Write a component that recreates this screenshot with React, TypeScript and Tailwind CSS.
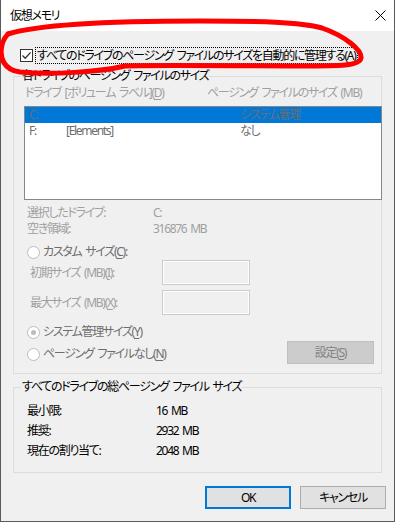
import type { ReactNode } from "react"

function U({ children }: { children: ReactNode }) {
  return <span className="underline underline-offset-[2px]">{children}</span>
}

function Radio({ checked = false }: { checked?: boolean }) {
  return (
    <span className="flex h-[13px] w-[13px] shrink-0 items-center justify-center rounded-full border border-[#bcbcbc] bg-white">
      {checked ? <span className="h-[5px] w-[5px] rounded-full bg-[#bcbcbc]" /> : null}
    </span>
  )
}

function GroupBox({
  title,
  className,
  children,
}: {
  title: string
  className: string
  children: ReactNode
}) {
  return (
    <div className={"relative ml-[12px] flex w-[369px] flex-col border border-[#dcdcdc] " + className}>
      <span className="absolute -top-[9px] left-[7px] bg-[#f0f0f0] px-[1px] leading-[16px] text-black">
        {title}
      </span>
      {children}
    </div>
  )
}

function SizeField({ label }: { label: ReactNode }) {
  return (
    <div className="flex h-[25px] items-center pl-[16px]">
      <span className="w-[132px] text-[#a0a0a0]">{label}</span>
      <span className="h-[25px] w-[88px] border border-[#cccccc] shadow-[inset_0_0_0_1px_#ffffff]" />
    </div>
  )
}

const drives = [
  { drive: "C:", label: "", size: "システム管理", selected: true },
  { drive: "F:", label: "[Elements]", size: "なし", selected: false },
]

const totals = [
  { label: "最小限:", value: "16 MB" },
  { label: "推奨:", value: "2932 MB" },
  { label: "現在の割り当て:", value: "2048 MB" },
]

export default function App() {
  return (
    <div className="relative h-[523px] w-[396px] bg-white font-['Noto_Sans','Noto_Sans_CJK_JP',sans-serif] text-[12px] leading-[16px] tracking-[-1.3px] [word-spacing:2px] whitespace-nowrap text-black [font-feature-settings:'palt']">
      <div className="flex h-[522px] w-[395px] flex-col border-x border-b border-[#5a5a5a]">
        {/* title bar */}
        <div className="flex h-[31px] items-center bg-white pl-[9px]">
          <span>仮想メモリ</span>
          <svg className="mr-[8px] ml-auto" width="11" height="11" viewBox="0 0 11 11">
            <path d="M0.5 0.5 L10.5 10.5 M10.5 0.5 L0.5 10.5" stroke="#000" strokeWidth="1" />
          </svg>
        </div>

        <div className="flex flex-1 flex-col bg-[#f0f0f0]">
          <div className="mt-[16px] flex h-[17px] items-center pl-[19px]">
            <span className="flex h-[13px] w-[13px] items-center justify-center border border-[#333333] bg-white">
              <svg width="11" height="11" viewBox="0 0 11 11">
                <path d="M1.5 5.5 L4.2 8.3 L9.6 2.4" fill="none" stroke="#333" strokeWidth="1.3" />
              </svg>
            </span>
            <span className="ml-[2px] flex h-[17px] items-center border border-dotted border-black px-[1px]">
              すべてのドライブのページング ファイルのサイズを自動的に管理する(<U>A</U>)
            </span>
          </div>

          <GroupBox title="各ドライブのページング ファイルのサイズ" className="mt-[12px] h-[298px]">
            <div className="mt-[8px] flex h-[16px] pl-[11px] text-[#a0a0a0]">
              <span className="w-[182px]">
                ドライブ [ボリューム ラベル](<U>D</U>)
              </span>
              <span>ページング ファイルのサイズ (MB)</span>
            </div>

            <div className="mt-[5px] ml-[10px] h-[94px] w-[358px] border border-[#828790] bg-white">
              {drives.map((d) => (
                <div
                  key={d.drive}
                  className={
                    "flex h-[16px] pl-[4px] text-[#6d6d6d] " + (d.selected ? "bg-[#0078d7]" : "")
                  }
                >
                  <span className="w-[37px]">{d.drive}</span>
                  <span className="w-[174px]">{d.label}</span>
                  <span>{d.size}</span>
                </div>
              ))}
            </div>

            <div className="mt-[5px] flex h-[16px] items-center pl-[13px] text-[#a0a0a0]">
              <span className="w-[126px]">選択したドライブ:</span>
              <span>C:</span>
            </div>
            <div className="flex h-[16px] items-center pl-[13px] text-[#a0a0a0]">
              <span className="w-[126px]">空き領域:</span>
              <span>316876 MB</span>
            </div>

            <div className="mt-[7px] flex h-[16px] items-center gap-[3px] pl-[13px] text-[#6d6d6d]">
              <Radio />
              <span>
                カスタム サイズ(<U>C</U>):
              </span>
            </div>
            <SizeField
              label={
                <>
                  初期サイズ (MB)(<U>I</U>):
                </>
              }
            />
            <div className="mt-[5px]">
              <SizeField
                label={
                  <>
                    最大サイズ (MB)(<U>X</U>):
                  </>
                }
              />
            </div>

            <div className="mt-[9px] flex h-[16px] items-center gap-[3px] pl-[13px] text-[#6d6d6d]">
              <Radio checked />
              <span>
                システム管理サイズ(<U>Y</U>)
              </span>
            </div>
            <div className="flex h-[24px] items-start pl-[13px]">
              <div className="mt-[6px] flex h-[16px] items-center gap-[3px] text-[#6d6d6d]">
                <Radio />
                <span>
                  ページング ファイルなし(<U>N</U>)
                </span>
              </div>
              <button className="mt-[1px] mr-[7px] ml-auto flex h-[23px] w-[87px] items-center justify-center border border-[#bfbfbf] bg-[#cccccc] text-[#838383]">
                設定(<U>S</U>)
              </button>
            </div>
          </GroupBox>

          <GroupBox title="すべてのドライブの総ページング ファイル サイズ" className="mt-[13px] h-[86px] pt-[13px]">
            {totals.map((t) => (
              <div key={t.label} className="flex h-[20px] items-center pl-[13px]">
                <span className="w-[129px]">{t.label}</span>
                <span>{t.value}</span>
              </div>
            ))}
          </GroupBox>

          <div className="mt-[13px] flex justify-end gap-[9px] pr-[8px]">
            <button className="flex h-[23px] w-[86px] items-center justify-center border-2 border-[#0078d7] bg-[#e1e1e1]">
              OK
            </button>
            <button className="flex h-[23px] w-[86px] items-center justify-center border border-[#adadad] bg-[#e1e1e1]">
              キャンセル
            </button>
          </div>
        </div>
      </div>

      {/* red hand-drawn annotation */}
      <svg className="pointer-events-none absolute top-0 left-0" width="396" height="523" viewBox="0 0 396 523">
        <path
          d="M8 34 C40 24 120 21 200 21 C260 21 300 22 322 28 C345 36 362 50 361 58 C360 66 340 66 300 66 C240 66 160 65 125 66 C100 72 50 75 20 72 C4 70 -1 58 2 45 C3 40 5 37 8 34"
          fill="none"
          stroke="#ff0000"
          strokeWidth="5"
          strokeLinecap="round"
          strokeLinejoin="round"
        />
      </svg>
    </div>
  )
}
